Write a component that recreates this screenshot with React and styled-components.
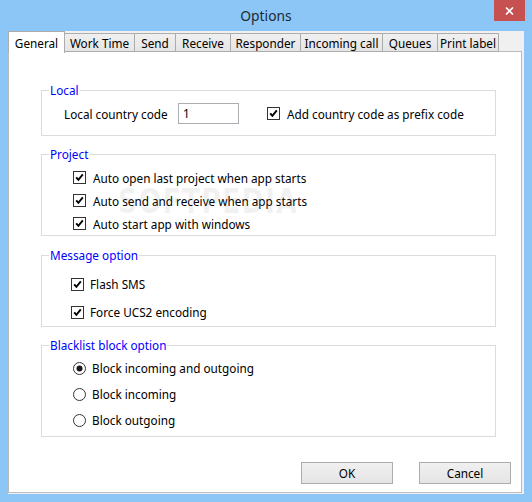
import React from 'react';
import styled, { createGlobalStyle } from 'styled-components';

const Global = createGlobalStyle`
  html, body { margin: 0; padding: 0; background: #8bc6f6; }
  body { font-family: "Noto Sans", "Open Sans", sans-serif; }
  * { box-sizing: border-box; }
`;

const Window = styled.div`
  width: 532px;
  height: 502px;
  background: #8bc6f6;
  display: flex;
  flex-direction: column;
  font-family: "Noto Sans", "Open Sans", sans-serif;
  font-size: 11.75px;
  color: #000;
`;

const TitleBar = styled.div`
  height: 31px;
  flex: none;
  display: grid;
  grid-template-columns: 1fr auto 1fr;
  align-items: start;
`;

const Title = styled.div`
  grid-column: 2;
  font-size: 13.8px;
  line-height: 31px;
  color: #1e2a36;
`;

const CloseButton = styled.div`
  grid-column: 3;
  justify-self: end;
  margin-right: 7px;
  width: 31px;
  height: 21px;
  background: #c75050;
  display: flex;
  align-items: center;
  justify-content: center;
`;

const Client = styled.div`
  margin: 0 8px;
  height: 463px;
  background: #f0f0f0;
  display: flex;
  flex-direction: column;
`;

const TabStrip = styled.div`
  height: 21px;
  flex: none;
  display: flex;
  align-items: flex-end;
  position: relative;
  z-index: 1;
`;

const Tab = styled.div`
  width: ${p => p.$w}px;
  height: ${p => (p.$active ? 22 : 19)}px;
  margin-left: ${p => (p.$first ? 0 : -1)}px;
  margin-bottom: ${p => (p.$active ? -1 : 0)}px;
  border: 1px solid #acacac;
  border-bottom: ${p => (p.$active ? 'none' : '1px solid #acacac')};
  background: ${p => (p.$active ? '#ffffff' : 'linear-gradient(#f0f0f0, #e5e5e5)')};
  display: flex;
  align-items: center;
  justify-content: center;
  line-height: 16px;
  white-space: nowrap;
  position: relative;
  z-index: ${p => (p.$active ? 2 : 1)};
`;

const Page = styled.div`
  flex: 1;
  margin: -1px 2px 1px 0;
  background: #fff;
  border: 1px solid #bcbcbc;
  padding: 38px 10px 0 32px;
  display: flex;
  flex-direction: column;
  position: relative;
`;

const Watermark = styled.div`
  position: absolute;
  left: 109px;
  top: 134px;
  font-family: "DejaVu Sans", sans-serif;
  font-weight: bold;
  font-size: 27px;
  letter-spacing: 1px;
  transform: scaleY(1.25);
  color: rgba(110, 110, 110, 0.09);
  pointer-events: none;
  white-space: nowrap;
`;

const Group = styled.div`
  height: ${p => p.$h}px;
  margin-top: ${p => p.$mt}px;
  margin-right: 15px;
  border: 1px solid #dcdcdc;
  display: flex;
  flex-direction: column;
  padding-left: ${p => p.$pl}px;
`;

const Legend = styled.div`
  align-self: flex-start;
  height: 16px;
  line-height: 16px;
  margin: -9px 0 0 ${p => 7 - p.$pl}px;
  padding: 0 1px;
  background: #fff;
  color: #0000ff;
  white-space: nowrap;
`;

const GroupBody = styled.div`
  padding-top: ${p => p.$pt}px;
  display: flex;
  flex-direction: column;
`;

const FieldRow = styled.div`
  height: 21px;
  display: flex;
  align-items: center;
  padding-left: 22px;
`;

const FieldLabel = styled.div`
  width: 114px;
  white-space: nowrap;
`;

const TextInput = styled.div`
  width: 61px;
  height: 21px;
  border: 1px solid #abadb3;
  padding-left: 4px;
  line-height: 19px;
  background: #fff;
`;

const OptionRow = styled.label`
  height: ${p => p.$h}px;
  display: flex;
  align-items: center;
  gap: ${p => p.$gap}px;
  margin-left: ${p => p.$ml || 0}px;
  white-space: nowrap;
`;

const Box = styled.span`
  width: 13px;
  height: 13px;
  flex: none;
  border: 1px solid #333;
  background: #fff;
  display: flex;
  align-items: center;
  justify-content: center;
`;

const RadioDot = styled.span`
  width: 13px;
  height: 13px;
  flex: none;
  display: block;
`;

const ButtonRow = styled.div`
  margin-top: 25px;
  display: flex;
  justify-content: flex-end;
  gap: 26px;
`;

const Button = styled.div`
  width: 92px;
  height: 22px;
  border: 1px solid #acacac;
  background: linear-gradient(#f0f0f0, #e5e5e5);
  display: flex;
  align-items: center;
  justify-content: center;
`;

const Check = ({ label, h, gap, ml }) => (
  <OptionRow $h={h} $gap={gap} $ml={ml}>
    <Box>
      <svg width="11" height="11" viewBox="0 0 11 11">
        <path d="M2.2 5.3 L4.4 7.8 L8.8 2.4" fill="none" stroke="#000" strokeWidth="1.9" />
      </svg>
    </Box>
    <span>{label}</span>
  </OptionRow>
);

const Radio = ({ label, checked, h, gap }) => (
  <OptionRow $h={h} $gap={gap}>
    <RadioDot>
      <svg width="13" height="13" viewBox="0 0 13 13">
        <circle cx="6.5" cy="6.5" r="6" fill="#fff" stroke="#333" strokeWidth="1" />
        {checked && <circle cx="6.5" cy="6.5" r="3" fill="#1a1a1a" />}
      </svg>
    </RadioDot>
    <span>{label}</span>
  </OptionRow>
);

const tabs = [
  ['General', 57],
  ['Work Time', 71],
  ['Send', 42],
  ['Receive', 56],
  ['Responder', 71],
  ['Incoming call', 83],
  ['Queues', 56],
  ['Print label', 62],
];

export default function App() {
  return (
    <>
      <Global />
      <Window>
        <TitleBar>
          <Title>Options</Title>
          <CloseButton>
            <svg width="9" height="8" viewBox="0 0 9 8">
              <path d="M1 0.5 L8 7.5 M8 0.5 L1 7.5" stroke="#fff" strokeWidth="1.6" />
            </svg>
          </CloseButton>
        </TitleBar>
        <Client>
          <TabStrip>
            {tabs.map(([t, w], i) => (
              <Tab key={t} $w={w} $active={i === 0} $first={i === 0}>
                {t}
              </Tab>
            ))}
          </TabStrip>
          <Page>
            <Group $h={46} $mt={0} $pl={0}>
              <Legend $pl={0}>Local</Legend>
              <GroupBody $pt={5}>
                <FieldRow>
                  <FieldLabel>Local country code</FieldLabel>
                  <TextInput>1</TextInput>
                  <Check label="Add country code as prefix code" h={21} gap={7} ml={28} />
                </FieldRow>
              </GroupBody>
            </Group>

            <Group $h={82} $mt={18} $pl={31}>
              <Legend $pl={31}>Project</Legend>
              <GroupBody $pt={4}>
                <Check label="Auto open last project when app starts" h={23} gap={7} />
                <Check label="Auto send and receive when app starts" h={23} gap={7} />
                <Check label="Auto start app with windows" h={23} gap={7} />
              </GroupBody>
            </Group>

            <Group $h={72} $mt={19} $pl={29}>
              <Legend $pl={29}>Message option</Legend>
              <GroupBody $pt={7}>
                <Check label="Flash SMS" h={28} gap={6} />
                <Check label="Force UCS2 encoding" h={28} gap={6} />
              </GroupBody>
            </Group>

            <Group $h={92} $mt={18} $pl={31}>
              <Legend $pl={31}>Blacklist block option</Legend>
              <GroupBody $pt={2}>
                <Radio label="Block incoming and outgoing" checked h={26} gap={6} />
                <Radio label="Block incoming" h={26} gap={6} />
                <Radio label="Block outgoing" h={26} gap={6} />
              </GroupBody>
            </Group>

            <ButtonRow>
              <Button>OK</Button>
              <Button>Cancel</Button>
            </ButtonRow>
            <Watermark>SOFTPEDIA</Watermark>
          </Page>
        </Client>
      </Window>
    </>
  );
}
